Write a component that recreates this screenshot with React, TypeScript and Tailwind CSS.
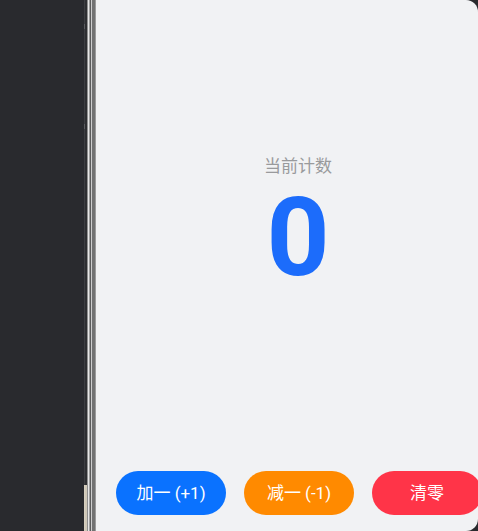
import React, { useState } from 'react';

const font = { fontFamily: 'Roboto, "Noto Sans CJK SC", sans-serif' };

const PillButton: React.FC<{ label: string; color: string; onClick: () => void }> = ({ label, color, onClick }) => (
  <button
    onClick={onClick}
    className={`w-[110px] h-[44px] shrink-0 rounded-full text-white text-[17px] leading-none ${color}`}
  >
    {label}
  </button>
);

const App: React.FC = () => {
  const [count, setCount] = useState(0);

  return (
    <div className="w-[478px] h-[531px] flex bg-[#292a2e] overflow-hidden" style={font}>
      {/* dark side area */}
      <div className="w-[84px] shrink-0 bg-[#292a2e]" />

      {/* window edge strip */}
      <div className="w-[12px] shrink-0 flex">
        <div className="w-[1px] bg-[#3c3d41] flex flex-col">
          <div className="h-[24px]" />
          <div className="h-[5px] bg-[#5a5b5f]" />
          <div className="h-[95px]" />
          <div className="h-[5px] bg-[#5a5b5f]" />
          <div className="flex-1" />
          <div className="h-[46px] bg-[#d6cfbf]" />
        </div>
        <div className="w-[2px] bg-[#2d2e31] flex flex-col">
          <div className="flex-1" />
          <div className="h-[46px] bg-[#cfc8b8]" />
        </div>
        <div className="w-[1px] bg-[#8e8e8e]" />
        <div className="w-[1px] bg-[#e6e6e6]" />
        <div className="w-[1px] bg-[#a2a2a2]" />
        <div className="w-[1px] bg-[#5c5c5c]" />
        <div className="w-[1px] bg-[#cdcdcd]" />
        <div className="w-[3px] bg-[#727272]" />
        <div className="w-[1px] bg-[#9c9c9c]" />
      </div>

      {/* counter panel */}
      <div className="flex-1 rounded-r-[12px] overflow-hidden bg-[#f1f2f4]">
        <div className="w-[404px] h-full flex flex-col">
          <div className="flex-1 flex flex-col items-center pt-[155px]">
            <div className="text-[17px] leading-[22px] text-[#999a9c]">当前计数</div>
            <div className="text-[110px] leading-[110px] font-bold text-[#1c6cfb] mt-[6px]">{count}</div>
          </div>
          <div className="flex gap-[18px] pl-[20px] pb-[16px]">
            <PillButton label="加一 (+1)" color="bg-[#0a72ff]" onClick={() => setCount(c => c + 1)} />
            <PillButton label="减一 (-1)" color="bg-[#ff8a00]" onClick={() => setCount(c => c - 1)} />
            <PillButton label="清零" color="bg-[#ff3448]" onClick={() => setCount(0)} />
          </div>
        </div>
      </div>
    </div>
  );
};

export default App;
